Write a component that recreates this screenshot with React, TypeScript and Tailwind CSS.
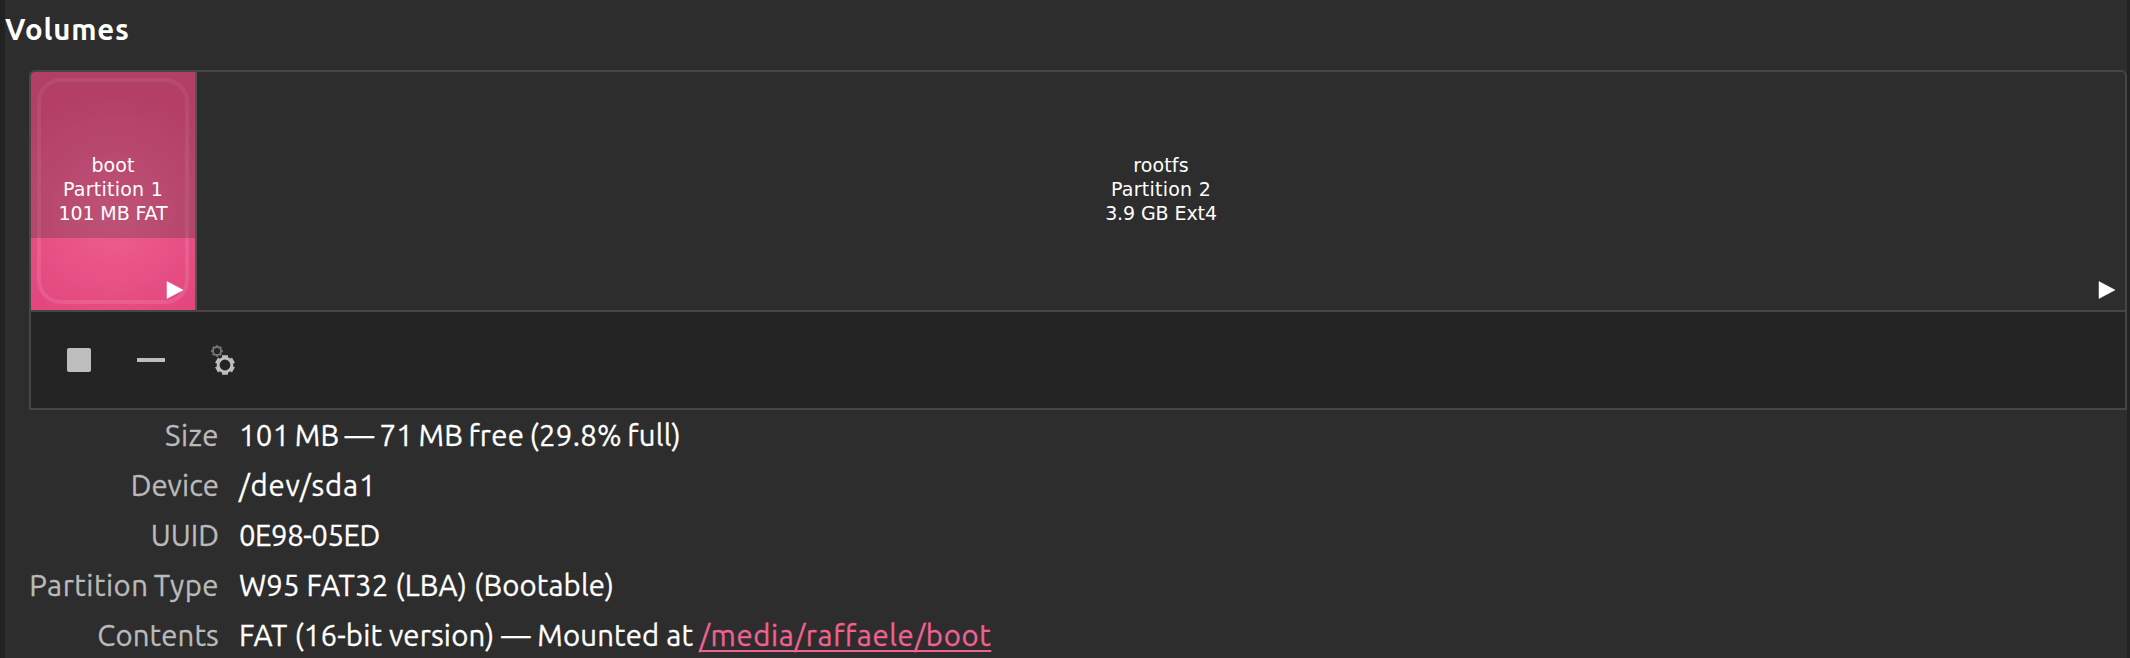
import type { ReactNode } from "react";

const sans = "font-['Ubuntu','Noto_Sans',sans-serif]";

function gearPath(cx: number, cy: number, outer: number, body: number, hole: number, teeth: number, tooth: number) {
  let d = "";
  for (let i = 0; i < teeth; i++) {
    const a = (i * 2 * Math.PI) / teeth - Math.PI / 2;
    const points: [number, number][] = [
      [body, a - tooth * 1.15],
      [outer, a - tooth],
      [outer, a + tooth],
      [body, a + tooth * 1.15],
    ];
    points.forEach(([r, t], j) => {
      const x = (cx + r * Math.cos(t)).toFixed(2);
      const y = (cy + r * Math.sin(t)).toFixed(2);
      d += i === 0 && j === 0 ? `M${x} ${y}` : j === 0 ? `A${body} ${body} 0 0 1 ${x} ${y}` : `L${x} ${y}`;
    });
  }
  d += `Z M${cx - hole} ${cy}a${hole} ${hole} 0 1 0 ${hole * 2} 0a${hole} ${hole} 0 1 0 ${-hole * 2} 0Z`;
  return d;
}

function GearsIcon() {
  return (
    <svg width="26" height="32" viewBox="210 345 26 32" fillRule="evenodd">
      <path d={gearPath(217, 352, 6, 4.8, 3.1, 8, 0.22)} fill="#747474" />
      <path d={gearPath(225, 366, 10.2, 8.3, 5.4, 6, 0.3)} fill="#bebebe" />
    </svg>
  );
}

function PlayMark({ place }: { place: string }) {
  return (
    <svg width="18" height="20" viewBox="0 0 18 20" className={`absolute bottom-[10px] ${place}`}>
      <path d="M1 1.5 L17 10 L1 18.5 Z" fill="#fff" stroke="#fff" strokeOpacity="0.5" />
    </svg>
  );
}

type Line = { text: string; spacing: string };

function PartitionText({ lines }: { lines: Line[] }) {
  return (
    <div className="relative mb-[4px] flex flex-col items-center font-['DejaVu_Sans',sans-serif] text-[19px] leading-[24px] text-white">
      {lines.map((line) => (
        <span key={line.text} className={line.spacing}>
          {line.text}
        </span>
      ))}
    </div>
  );
}

function Row({ label, spacing, children }: { label: string; spacing: string; children: ReactNode }) {
  return (
    <div className="flex h-[50px] items-center whitespace-nowrap">
      <dt className="flex w-[190px] justify-end text-[#bababa]">
        <span className={spacing}>{label}</span>
      </dt>
      <dd className="ml-5 flex text-white">{children}</dd>
    </div>
  );
}

export default function App() {
  return (
    <div className={`h-[658px] w-[2130px] overflow-hidden border-r-[3px] border-l-[5px] border-[#222222] bg-[#2d2d2d] ${sans}`}>
      <h2 className="flex h-[70px] items-start pt-[10px] text-[29.33px] leading-[40px] font-bold text-white">
        <span className="tracking-[0.85px]">Volumes</span>
      </h2>
      <section className="ml-6 h-[340px] rounded-t-[6px] border-2 border-[#464646]">
        <div className="flex h-[238px]">
          <div className="relative flex w-[166px] items-center justify-center overflow-hidden rounded-tl-[4px] border-r-2 border-[#555555] bg-[radial-gradient(circle_at_50%_60%,#ef5f90,#e0447a_80%)]">
            <div className="absolute inset-x-[6px] top-[6px] bottom-[6px] rounded-[24px] border-4 border-white/10" />
            <div className="absolute inset-x-0 top-0 h-[166px] bg-[#2d2d2d]/25" />
            <PartitionText
              lines={[
                { text: "boot", spacing: "tracking-[0.1px]" },
                { text: "Partition 1", spacing: "tracking-[0.25px]" },
                { text: "101 MB FAT", spacing: "tracking-[-0.1px]" },
              ]}
            />
            <PlayMark place="right-[11px]" />
          </div>
          <div className="relative flex flex-1 items-center justify-center">
            <PartitionText
              lines={[
                { text: "rootfs", spacing: "tracking-[0.1px]" },
                { text: "Partition 2", spacing: "tracking-[0.25px]" },
                { text: "3.9 GB Ext4", spacing: "tracking-[-0.1px]" },
              ]}
            />
            <PlayMark place="right-[9px]" />
          </div>
        </div>
        <div className="flex h-[98px] items-center border-t-2 border-[#464646] bg-[#242424] pl-9">
          <div className="size-6 rounded-[2px] bg-[#bebebe]" />
          <div className="ml-[46px] h-1 w-7 bg-[#bebebe]" />
          <div className="ml-[45px]">
            <GearsIcon />
          </div>
        </div>
      </section>
      <dl className="ml-6 pt-px text-[29.33px] leading-[50px] [-webkit-text-stroke-width:0.3px]">
        <Row label="Size" spacing="tracking-[0.5px]">
          <span className="tracking-[0.28px] [word-spacing:-1.7px]">101 MB — 71 MB free (29.8% full)</span>
        </Row>
        <Row label="Device" spacing="tracking-[0.05px]">
          <span className="tracking-[0.85px]">/dev/sda1</span>
        </Row>
        <Row label="UUID" spacing="tracking-[0px]">
          <span className="tracking-[-0.45px]">0E98-05ED</span>
        </Row>
        <Row label="Partition Type" spacing="tracking-[0.5px] [word-spacing:-2px]">
          <span className="tracking-[0.15px]">W95 FAT32 (LBA) (Bootable)</span>
        </Row>
        <Row label="Contents" spacing="tracking-[0.15px]">
          <span className="tracking-[0.15px]">FAT (16-bit version) — Mounted at</span>
          <a className="ml-[6px] tracking-[0.62px] text-[#f06292] underline decoration-2 underline-offset-[4px] [text-decoration-skip-ink:none]">
            /media/raffaele/boot
          </a>
        </Row>
      </dl>
    </div>
  );
}
